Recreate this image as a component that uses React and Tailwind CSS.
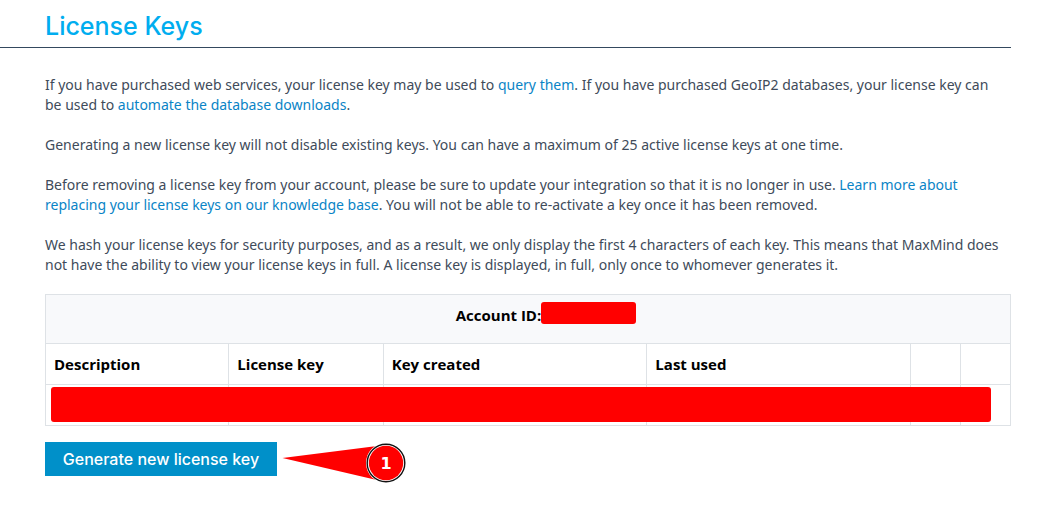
const linkClass = "text-[#0a84c6] hover:underline";

const columns = [
  { id: "description", label: "Description" },
  { id: "key", label: "License key" },
  { id: "created", label: "Key created" },
  { id: "used", label: "Last used" },
  { id: "edit", label: "" },
  { id: "remove", label: "" },
];

function Intro() {
  return (
    <div className="space-y-5 pr-2 font-['Noto_Sans',sans-serif] text-sm leading-5 text-[#404b5a]">
      <p>
        If you have purchased web services, your license key may be used to{" "}
        <a href="#query" className={linkClass}>query them</a>. If you have purchased GeoIP2
        databases, your license key can be used to{" "}
        <a href="#automate" className={linkClass}>automate the database downloads</a>.
      </p>
      <p>
        Generating a new license key will not disable existing keys. You can have a maximum of 25
        active license keys at one time.
      </p>
      <p>
        Before removing a license key from your account, please be sure to update your integration
        so that it is no longer in use.{" "}
        <a href="#replace" className={linkClass}>
          Learn more about replacing your license keys on our knowledge base
        </a>
        . You will not be able to re-activate a key once it has been removed.
      </p>
      <p>
        We hash your license keys for security purposes, and as a result, we only display the first
        4 characters of each key. This means that MaxMind does not have the ability to view your
        license keys in full. A license key is displayed, in full, only once to whomever generates
        it.
      </p>
    </div>
  );
}

function KeysTable() {
  return (
    <div className="relative">
      <table className="w-full table-fixed border-collapse text-left text-[15px] leading-5 text-black">
        <colgroup>
          <col className="w-[19%]" />
          <col className="w-[16%]" />
          <col />
          <col />
          <col className="w-[50px]" />
          <col className="w-[50px]" />
        </colgroup>
        <thead>
          <tr className="h-[49px] bg-[#f8f9fb]">
            <th colSpan={6} className="border border-[#dee2e6] p-0 pb-2 pl-9 font-bold">
              <div className="flex items-center justify-center">
                <span>Account ID:</span>
                <span className="-mt-1 h-[22px] w-[95px] rounded-[3px] bg-[#ff0000]" />
              </div>
            </th>
          </tr>
          <tr className="h-[41px]">
            {columns.map((column) => (
              <th key={column.id} className="border border-[#dee2e6] px-2 py-0 font-bold">
                {column.label}
              </th>
            ))}
          </tr>
        </thead>
        <tbody>
          <tr className="h-[41px]">
            {columns.map((column) => (
              <td key={column.id} className="border border-[#dee2e6] p-0" />
            ))}
          </tr>
        </tbody>
      </table>
      <div className="absolute right-5 bottom-1 left-1.5 h-[35px] rounded-[3px] bg-[#ff0000]" />
    </div>
  );
}

function StepMarker() {
  return (
    <svg width="130" height="42" viewBox="0 0 130 42" className="shrink-0" role="img" aria-label="1">
      <path d="M5.5 16 L104 3.5 V39 Z" fill="#ff0000" />
      <circle cx="109" cy="21" r="20" fill="#fff" />
      <circle cx="109" cy="21" r="18.8" fill="#fff" stroke="#111" strokeWidth="1.4" />
      <circle cx="109" cy="21" r="17.2" fill="#ff0000" />
      <text
        x="109"
        y="27"
        textAnchor="middle"
        fill="#fff"
        className="font-['DejaVu_Sans',sans-serif] text-base font-bold"
      >
        1
      </text>
    </svg>
  );
}

export default function App() {
  return (
    <main className="min-h-screen bg-white pr-[34px] font-['Open_Sans','Noto_Sans',sans-serif]">
      <header className="border-b border-[#34495e] pt-[9px] pb-[3px] pl-[45px]">
        <h1 className="font-['Inter',sans-serif] text-[25px] leading-[35px] font-medium text-[#00adef]">
          License Keys
        </h1>
      </header>
      <div className="pt-[27px] pl-[45px]">
        <Intro />
        <div className="pt-[19px]">
          <KeysTable />
        </div>
        <div className="flex items-start pt-4">
          <button
            type="button"
            className="h-[34px] w-[232px] bg-[#0090c9] font-['Inter',sans-serif] text-base font-medium text-white"
          >
            Generate new license key
          </button>
          <StepMarker />
        </div>
      </div>
    </main>
  );
}
